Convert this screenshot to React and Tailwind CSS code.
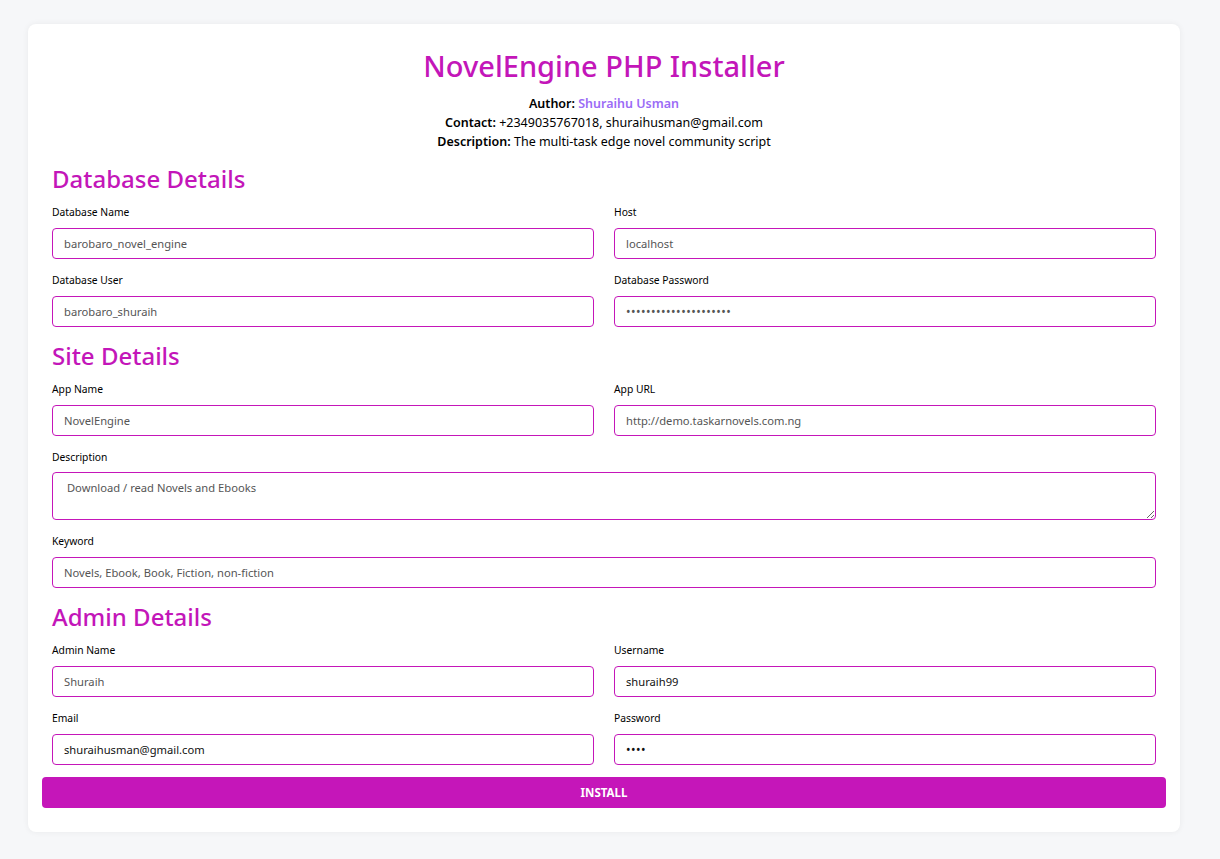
import React from "react";

const font = { fontFamily: '"Noto Sans", "Open Sans", sans-serif' };

function Label({ children, mb = "mb-[8px]" }) {
  return <label className={`text-[10.3px] leading-[15px] text-black ${mb}`}>{children}</label>;
}

function Field({ label, value, type = "text", dark = false }) {
  return (
    <div className="flex flex-col">
      <Label>{label}</Label>
      <input
        type={type}
        readOnly
        defaultValue={value}
        className={`block h-[31px] w-full rounded-[4px] border border-[#c516b9] bg-white px-[11px] outline-none ${type === "password" ? "text-[12px] tracking-[0.5px]" : "text-[11.2px]"} ${dark ? "text-[#111]" : "text-[#555]"}`}
      />
    </div>
  );
}

function Section({ title, top }) {
  return <h2 className={`text-[24px] leading-[30px] font-medium text-[#c316b9] mb-[11px] ${top}`}>{title}</h2>;
}

export default function App() {
  return (
    <div className="min-h-[859px] bg-[#f6f7f9] pl-[28px] pr-[40px] pt-[24px] pb-[27px]" style={font}>
      <div className="rounded-lg bg-white shadow-[0_0_6px_rgba(0,0,0,0.06)] px-[14px] pt-[22px] pb-[24px]">
        <div className="px-[10px]">
          <h1 className="text-center text-[29px] leading-[40px] font-medium text-[#c316b9] mb-[8px]">NovelEngine PHP Installer</h1>
          <div className="text-center text-[12.5px] leading-[19px] text-black">
            <p><b className="font-semibold">Author:</b> <span className="text-[#9b6cf6] font-semibold">Shuraihu Usman</span></p>
            <p><b className="font-semibold">Contact:</b> +2349035767018, shuraihusman@gmail.com</p>
            <p><b className="font-semibold">Description:</b> The multi-task edge novel community script</p>
          </div>

          <Section title="Database Details" top="mt-[13px]" />
          <div className="grid grid-cols-2 gap-x-[20px] gap-y-[14px]">
            <Field label="Database Name" value="barobaro_novel_engine" />
            <Field label="Host" value="localhost" />
            <Field label="Database User" value="barobaro_shuraih" />
            <Field label="Database Password" value="barobaro_shuraih_pass" type="password" />
          </div>

          <Section title="Site Details" top="mt-[14px]" />
          <div className="grid grid-cols-2 gap-x-[20px] gap-y-[14px]">
            <Field label="App Name" value="NovelEngine" />
            <Field label="App URL" value="http://demo.taskarnovels.com.ng" />
            <div className="col-span-2 flex flex-col">
              <Label mb="mb-[7px]">Description</Label>
              <textarea
                readOnly
                defaultValue={" Download / read Novels and Ebooks"}
                className="block h-[48px] w-full rounded-[4px] border border-[#c516b9] bg-white px-[11px] py-[6px] text-[11.2px] leading-[17px] text-[#555] outline-none"
              />
            </div>
            <div className="col-span-2">
              <Field label="Keyword" value="Novels, Ebook, Book, Fiction, non-fiction" />
            </div>
          </div>

          <Section title="Admin Details" top="mt-[14px]" />
          <div className="grid grid-cols-2 gap-x-[20px] gap-y-[14px]">
            <Field label="Admin Name" value="Shuraih" />
            <Field label="Username" value="shuraih99" dark />
            <Field label="Email" value="shuraihusman@gmail.com" dark />
            <Field label="Password" value="1234" type="password" dark />
          </div>
        </div>
        <button className="mt-[12px] block w-full h-[31px] rounded-[4px] bg-[#c516b9] text-white text-[11.5px] font-bold">INSTALL</button>
      </div>
    </div>
  );
}
